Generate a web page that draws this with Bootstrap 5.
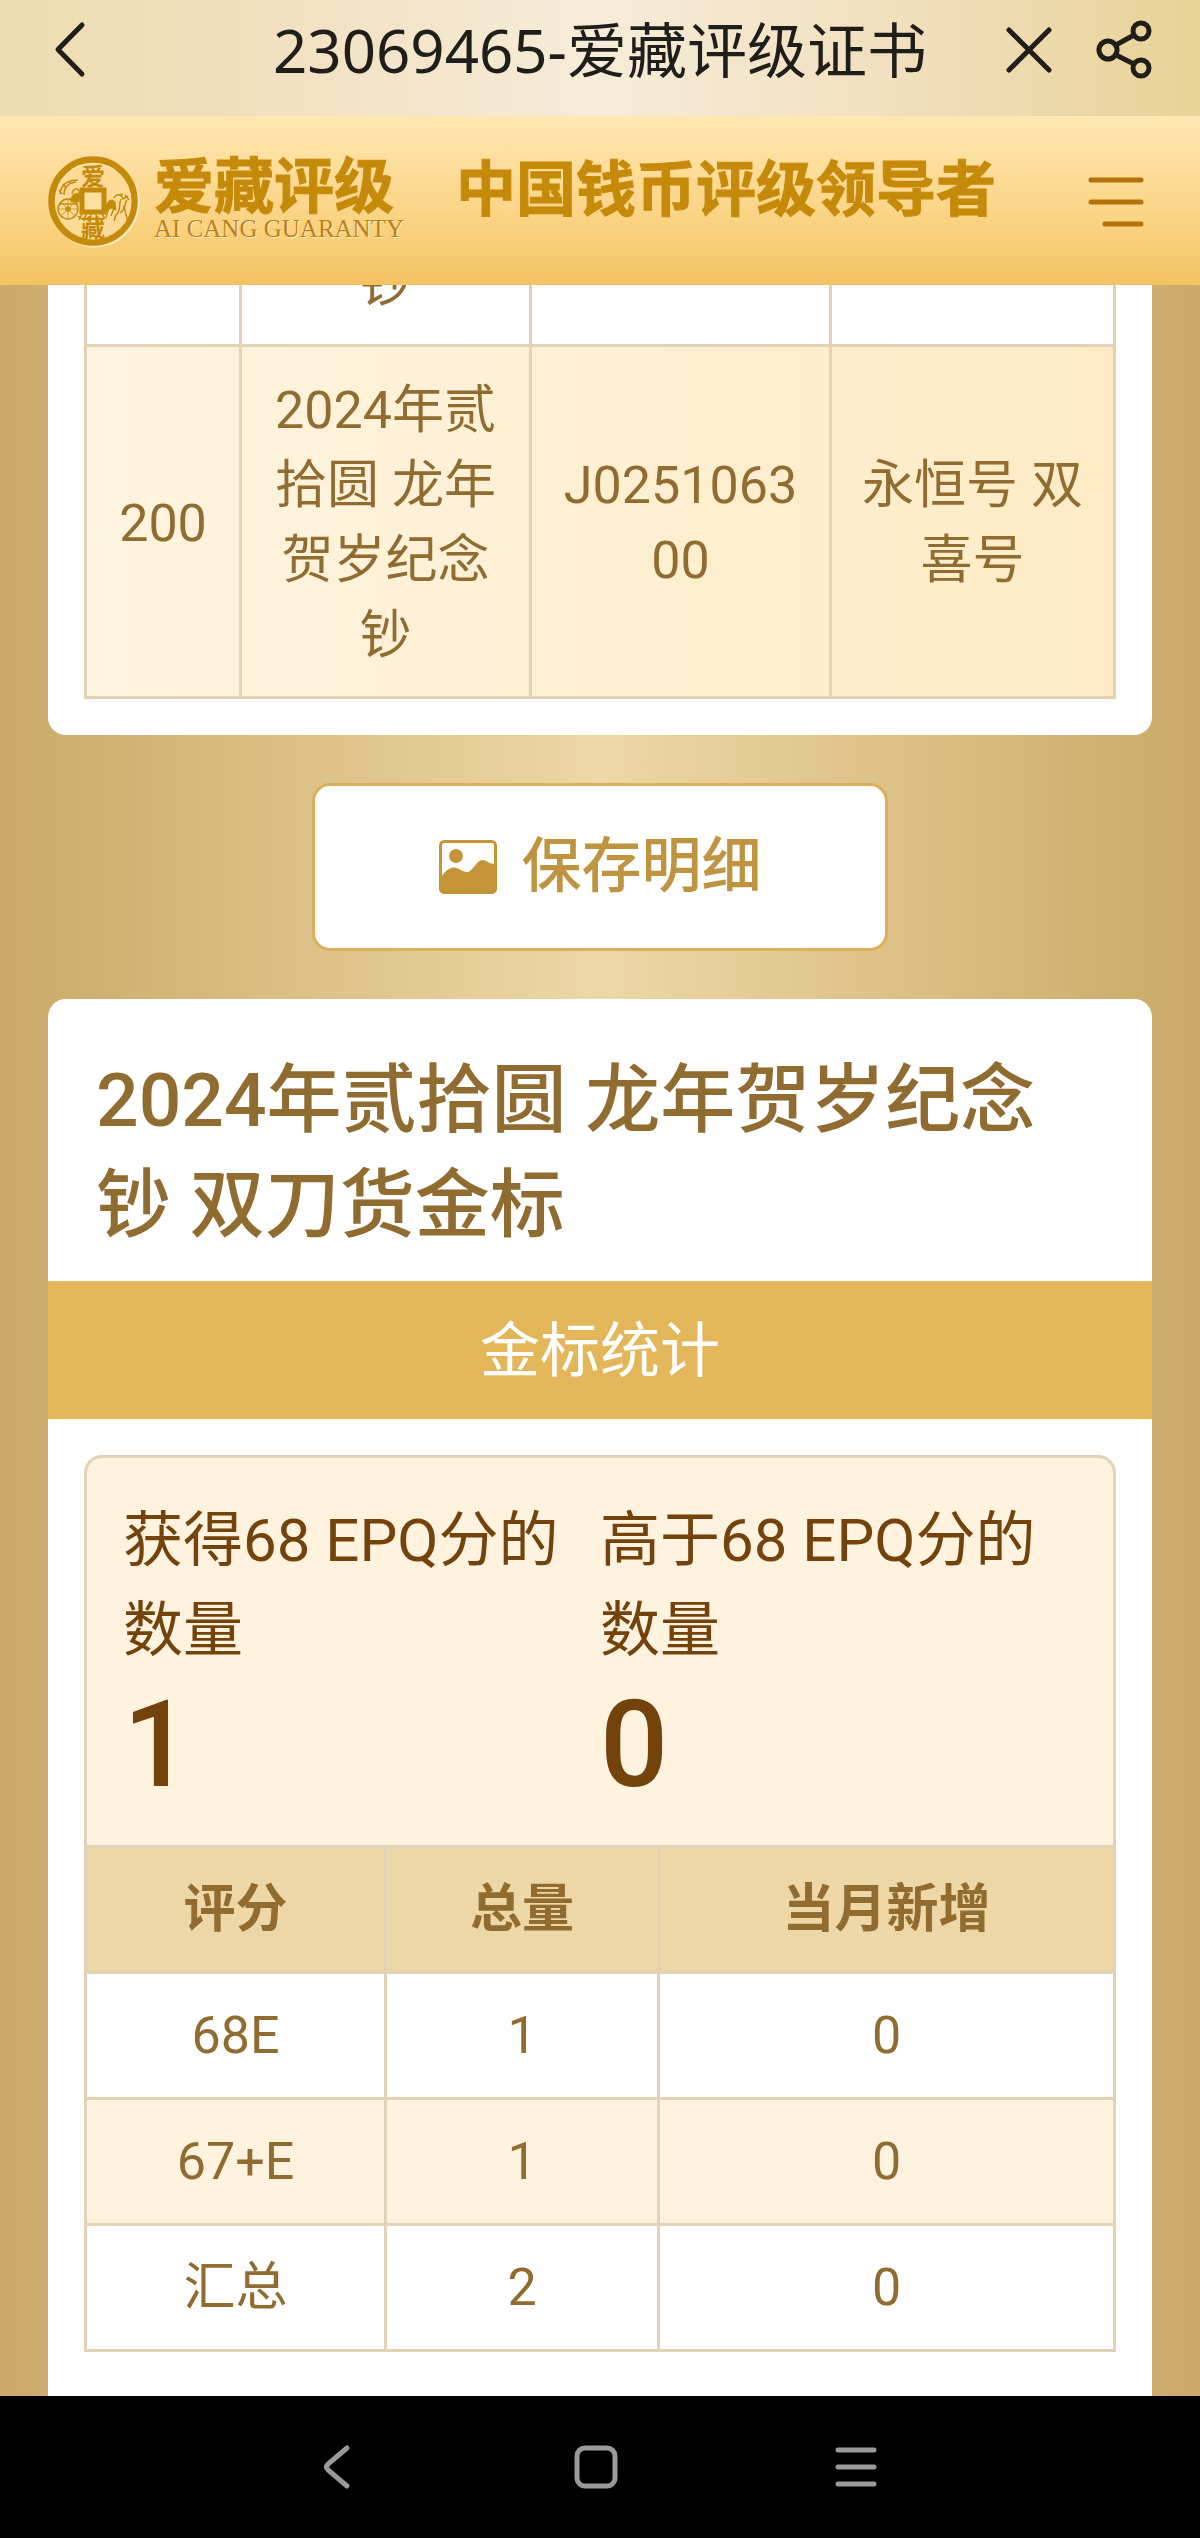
<!DOCTYPE html>
<html lang="zh-CN">
<head>
<meta charset="utf-8">
<meta name="viewport" content="width=device-width, initial-scale=1">
<title>23069465-爱藏评级证书</title>
<link href="https://cdn.jsdelivr.net/npm/bootstrap@5.3.0/dist/css/bootstrap.min.css" rel="stylesheet">
<style>
  :root {
    --gold-text: #906c30;
    --gold-line: #e2d3b6;
    --gold-band: #e4b65a;
    --gold-pale: #fff3df;
  }
  body {
    font-family: Roboto, "Noto Sans CJK SC", sans-serif;
    color: var(--gold-text);
  }
  svg { display: block; }
  .app-top {
    height: 116px;
    background: linear-gradient(90deg, #eeddb0 0%, #f1dfbd 20%, #f6ecd9 50%, #f1dfbd 75%, #e8d296 100%);
    color: #1f1e1a;
  }
  .app-side { width: 200px; }
  .app-title { font: 400 60px/72px "Noto Sans", "Noto Sans CJK SC", sans-serif; }
  .app-tools { gap: 35px; padding-right: 46px; }
  .site-head {
    height: 169px;
    padding: 40px 50px 0 48px;
    background: linear-gradient(180deg, #ffe7b3 0%, #fbd588 55%, #f3c361 100%);
    color: #c68a0b;
  }
  .brush {
    font: 700 60px/58px "Noto Sans CJK SC", sans-serif;
    -webkit-text-stroke: 1px #c68a0b;
  }
  .brand { margin-left: 14px; }
  .brand-zh { line-height: 52px; }
  .brand-en {
    font: 400 25px/42px "Liberation Serif", serif;
    color: #b9811c;
    text-shadow: 1px 1px 0 #ffecc0;
  }
  .slogan { margin-left: 52px; }
  .menu-btn { padding: 18px 6px; }
  .view {
    background: linear-gradient(90deg, #cda868 0%, #ccae6c 4%, #eed7a6 50%, #ccae6c 96%, #cda868 100%);
  }
  .sheet { margin: 0 48px; background: #fff; border-radius: 18px; }
  .sheet-scrolled { margin-top: -68px; border-radius: 0 0 18px 18px; padding: 0 36px 36px; }
  .sheet-open { border-radius: 18px 18px 0 0; }
  .grid-table {
    width: 100%;
    margin: 0;
    table-layout: fixed;
    border-collapse: collapse;
    text-align: center;
    font-size: 52px;
    line-height: 75px;
    word-break: break-all;
  }
  .grid-table th, .grid-table td { border: 3px solid var(--gold-line); vertical-align: middle; }
  .items td { padding: 26px 24px 23px; }
  .items .tinted { background: linear-gradient(90deg, #fff4e0, #feebc6); }
  .items .col-no { width: 155px; }
  .items .col-name { width: 290px; }
  .items .col-code { width: 300px; }
  .scores th, .scores td { padding: 24px; }
  .scores .col-grade { width: 300px; }
  .scores .col-total { width: 273px; }
  .scores thead th { background: #eed7a6; font-weight: 700; }
  .scores tbody tr:nth-child(even) { background: var(--gold-pale); }
  .save-btn {
    width: 48%;
    height: 168px;
    margin: 48px auto;
    gap: 25px;
    border: 3px solid #dbb05c;
    border-radius: 18px;
    background: #fff;
    color: #be9440;
    font-size: 60px;
    font-weight: 500;
    line-height: 90px;
  }
  .sheet-title { padding: 49px 48px 23px; margin: 0; font-size: 75px; line-height: 105px; font-weight: 500; }
  .band { margin: 0; padding-top: 4px; background: var(--gold-band); color: #fff; font-size: 60px; line-height: 134px; font-weight: 400; }
  .sheet-body { padding: 36px 36px 0; }
  .totals {
    padding: 38px 36px 30px;
    border: 3px solid var(--gold-line);
    border-bottom: 0;
    border-radius: 18px 18px 0 0;
    background: var(--gold-pale);
    color: #73430b;
  }
  .totals dt { font-size: 60px; line-height: 90px; font-weight: 400; }
  .totals dd { margin: 0; font-size: 120px; line-height: 139px; font-weight: 500; }
  .sys-nav { height: 142px; background: #000; color: #9b9a9a; padding-right: 8px; }
  .sys-nav .btn { width: 260px; }
</style>
</head>
<body>
<div class="vh-100 d-flex flex-column overflow-hidden">

  <header class="app-top d-flex align-items-center flex-shrink-0 pb-3">
    <div class="app-side ps-5">
      <button type="button" class="btn p-0 border-0" aria-label="返回">
        <svg width="44" height="60" viewBox="0 0 44 60" fill="none" stroke="#1f1e1a" stroke-width="5" stroke-linecap="round" stroke-linejoin="round"><path d="M34 5 10 29.500 34 54"/></svg>
      </button>
    </div>
    <h1 class="app-title flex-grow-1 text-center text-nowrap m-0">23069465-爱藏评级证书</h1>
    <div class="app-side app-tools d-flex justify-content-end align-items-center">
      <button type="button" class="btn p-0 border-0" aria-label="关闭">
        <svg width="60" height="60" viewBox="0 0 60 60" fill="none" stroke="#1f1e1a" stroke-width="5" stroke-linecap="round"><path d="M10 10 50 50M50 10 10 50"/></svg>
      </button>
      <button type="button" class="btn p-0 border-0" aria-label="分享">
        <svg width="60" height="60" viewBox="0 0 60 60" fill="none" stroke="#1f1e1a" stroke-width="5"><circle cx="14" cy="30" r="9"/><circle cx="47" cy="11" r="8"/><circle cx="47" cy="48" r="8"/><path d="M22 25 40 15M22 35 40 44"/></svg>
      </button>
    </div>
  </header>

  <nav class="site-head d-flex align-items-start flex-shrink-0">
    <a href="#" class="d-flex text-decoration-none text-reset" aria-label="爱藏评级">
      <svg width="92" height="92" viewBox="0 0 92 92" fill="none" stroke="#c68a0b">
        <circle cx="46.500" cy="46.500" r="41.500" stroke="#ffedc4" stroke-width="7"/>
        <circle cx="45" cy="45" r="41.500" stroke-width="6.500"/>
        <circle cx="45.500" cy="45.500" r="38" fill="#fcdb98" stroke="none"/>
        <rect x="34" y="34" width="22" height="22" fill="#fde0a0" stroke-width="5"/>
        <g fill="#c68a0b" stroke="none" font-family="Noto Sans CJK SC, sans-serif" font-weight="700" font-size="24" text-anchor="middle"><text x="45" y="29">爱</text><text x="45" y="81">藏</text></g>
        <circle cx="20" cy="53" r="10" stroke-width="1.500"/>
        <circle cx="20" cy="53" r="2" stroke-width="1.500"/>
        <path d="M20 43v20M10 53h20M13 46l14 14M27 46 13 60" stroke-width=".8"/>
        <path d="M12 38c1-9 7-14 18-14M16 39c0-7 4-12 12-13M11 34l3 4M15 28l3 4M21 25l2 3M24 38c1-5 5-7 7-3v8M12 48h18M22 43l8-2M30 60c4 5 12 3 16 3M34 58l-3 6M38 58l-2 7M43 58l-1 8M48 58l2 8M54 58l3 5" stroke-width="1.500"/>
        <path d="M23 43q2-7 8-5v8h-8zM58 50c2-6 6-8 9-4l1 8-5-2-5 4z" fill="#c68a0b" stroke-width="1"/>
        <path d="M66 42c2-4 7-5 9 1l5-3M73 43c-3 6 1 10-5 16l-2 6M75 50c3 3 2 8 5 15M60 54l-2 8M66 52l-3 8M71 39l4-1M77 39l4 5M79 44c-3 5-1 9-7 13" stroke-width="1.500"/>
      </svg>
      <span class="brand d-flex flex-column">
        <span class="brush brand-zh">爱藏评级</span>
        <span class="brand-en text-nowrap">AI CANG GUARANTY</span>
      </span>
    </a>
    <span class="brush slogan text-nowrap">中国钱币评级领导者</span>
    <button type="button" class="btn menu-btn border-0 ms-auto" aria-label="菜单">
      <svg width="56" height="56" viewBox="0 0 56 56" stroke="#b4730a" stroke-width="5" stroke-linecap="round"><path d="M3 6h50M3 28h50M17 50h36"/></svg>
    </button>
  </nav>

  <main class="view flex-grow-1 overflow-hidden d-flex flex-column">
    <section class="sheet sheet-scrolled">
      <table class="grid-table items">
        <colgroup><col class="col-no"><col class="col-name"><col class="col-code"><col></colgroup>
        <tbody>
          <tr><td></td><td>钞</td><td></td><td></td></tr>
          <tr class="tinted"><td>200</td><td>2024年贰拾圆 龙年贺岁纪念钞</td><td>J025106300</td><td>永恒号 双喜号</td></tr>
        </tbody>
      </table>
    </section>

    <button type="button" class="btn save-btn d-flex align-items-center justify-content-center flex-shrink-0">
      <svg width="58" height="54" viewBox="0 0 58 54"><rect x="1.500" y="1.500" width="55" height="51" rx="4" fill="#fff" stroke="#c49538" stroke-width="3"/><circle cx="17" cy="16" r="7" fill="#c49538"/><path d="M2 37C8 29 13 25 20 29c6 3 9 5 13 0 4-4 6-9 11-9 5 1 6 4 12 4v25q0 4-4 4H6q-4 0-4-4z" fill="#c49538"/></svg>
      <span>保存明细</span>
    </button>

    <section class="sheet sheet-open flex-grow-1">
      <h2 class="sheet-title">2024年贰拾圆 龙年贺岁纪念钞 双刀货金标</h2>
      <h3 class="band text-center">金标统计</h3>
      <div class="sheet-body">
        <div class="totals row g-0">
          <dl class="col-6 m-0"><dt>获得68 EPQ分的数量</dt><dd>1</dd></dl>
          <dl class="col-6 m-0"><dt>高于68 EPQ分的数量</dt><dd>0</dd></dl>
        </div>
        <table class="grid-table scores">
          <colgroup><col class="col-grade"><col class="col-total"><col></colgroup>
          <thead><tr><th scope="col">评分</th><th scope="col">总量</th><th scope="col">当月新增</th></tr></thead>
          <tbody>
            <tr><td>68E</td><td>1</td><td>0</td></tr>
            <tr><td>67+E</td><td>1</td><td>0</td></tr>
            <tr><td>汇总</td><td>2</td><td>0</td></tr>
          </tbody>
        </table>
      </div>
    </section>
  </main>

  <footer class="sys-nav d-flex align-items-center justify-content-center flex-shrink-0">
    <button type="button" class="btn p-0 border-0 d-flex justify-content-center" aria-label="后退">
      <svg width="30" height="46" viewBox="0 0 30 46" fill="none" stroke="#9b9a9a" stroke-width="5" stroke-linecap="round"><path d="M26 4 7 20q-3 3 0 6L26 42"/></svg>
    </button>
    <button type="button" class="btn p-0 border-0 d-flex justify-content-center" aria-label="主屏幕">
      <svg width="44" height="44" viewBox="0 0 44 44" fill="none" stroke="#9b9a9a" stroke-width="5"><rect x="3" y="3" width="38" height="38" rx="8"/></svg>
    </button>
    <button type="button" class="btn p-0 border-0 d-flex justify-content-center" aria-label="最近任务">
      <svg width="42" height="42" viewBox="0 0 42 42" stroke="#9b9a9a" stroke-width="5" stroke-linecap="round"><path d="M3 4h36M3 21h36M3 38h36"/></svg>
    </button>
  </footer>
</div>
<script src="https://cdn.jsdelivr.net/npm/bootstrap@5.3.0/dist/js/bootstrap.bundle.min.js"></script>
</body>
</html>
